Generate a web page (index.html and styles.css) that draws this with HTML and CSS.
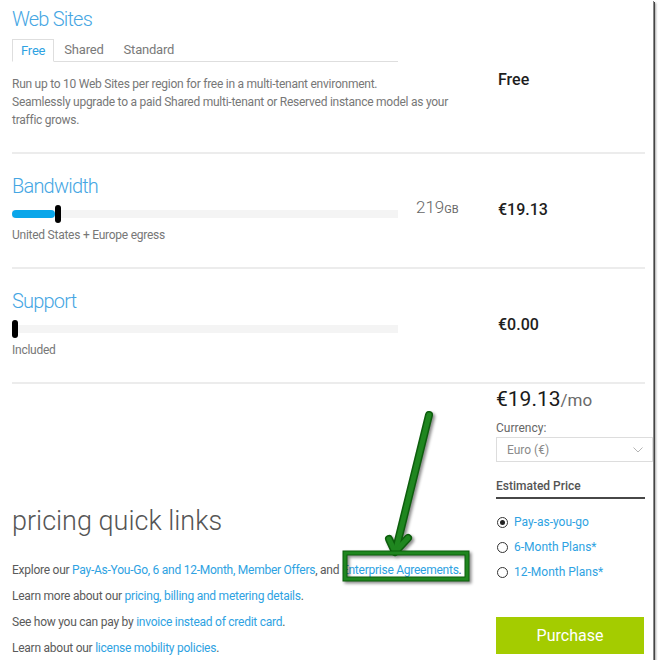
FILE: index.html
```html
<!DOCTYPE html>
<html lang="en">
<head>
<meta charset="utf-8">
<title>Pricing calculator</title>
<link rel="stylesheet" href="styles.css">
</head>
<body>
<div class="frame">
  <section class="row row-first">
    <div class="cell-main">
      <h2 class="title">Web Sites</h2>
      <div class="tabs">
        <span class="tab active">Free</span>
        <span class="tab">Shared</span>
        <span class="tab">Standard</span>
      </div>
      <p class="desc">Run up to 10 Web Sites per region for free in a multi-tenant environment.<br>Seamlessly upgrade to a paid Shared multi-tenant or Reserved instance model as your traffic grows.</p>
    </div>
    <div class="cell-mid"></div>
    <div class="cell-price cell-price-first">Free</div>
  </section>

  <section class="row">
    <div class="cell-main">
      <h2 class="title">Bandwidth</h2>
      <div class="slider">
        <div class="track"></div>
        <div class="fill" style="width:43px"></div>
        <div class="thumb" style="left:43px"></div>
      </div>
      <p class="caption">United States + Europe egress</p>
    </div>
    <div class="cell-mid"><span class="qty">219</span><span class="unit">GB</span></div>
    <div class="cell-price">€19.13</div>
  </section>

  <section class="row">
    <div class="cell-main">
      <h2 class="title">Support</h2>
      <div class="slider">
        <div class="track"></div>
        <div class="thumb" style="left:0"></div>
      </div>
      <p class="caption">Included</p>
    </div>
    <div class="cell-mid"></div>
    <div class="cell-price">€0.00</div>
  </section>

  <section class="bottom">
    <div class="links">
      <h2 class="links-title">pricing quick links</h2>
      <p class="link-line">Explore our <a>Pay-As-You-Go, 6 and 12-Month, Member Offers</a>, and <a>Enterprise Agreements</a>.</p>
      <p class="link-line">Learn more about our <a>pricing, billing and metering details</a>.</p>
      <p class="link-line">See how you can pay by <a>invoice instead of credit card</a>.</p>
      <p class="link-line">Learn about our <a>license mobility policies</a>.</p>
    </div>
    <aside class="summary">
      <div class="total">€19.13<span class="per">/mo</span></div>
      <label class="field-label">Currency:</label>
      <div class="select">
        <span>Euro (€)</span>
        <svg class="chev" width="10" height="6" viewBox="0 0 10 6"><path d="M0.5 0.5 L5 5 L9.5 0.5" fill="none" stroke="#b5b5b5" stroke-width="1"/></svg>
      </div>
      <div class="est">Estimated Price</div>
      <ul class="plans">
        <li class="plan"><span class="radio checked"></span><span><a>Pay-as-you-go</a></span></li>
        <li class="plan"><span class="radio"></span><span><a>6-Month Plans</a>*</span></li>
        <li class="plan"><span class="radio"></span><span><a>12-Month Plans</a>*</span></li>
      </ul>
      <button class="purchase">Purchase</button>
    </aside>
  </section>

  <svg class="annot" width="653" height="660" viewBox="0 0 653 660">
    <g class="mark">
      <line x1="429" y1="415" x2="396" y2="549" stroke="#0d5e0d" stroke-width="8" stroke-linecap="round"/>
      <path d="M389 539 L395 552 L408 538" fill="none" stroke="#0d5e0d" stroke-width="8" stroke-linecap="round" stroke-linejoin="round"/>
      <line x1="429" y1="415" x2="396" y2="549" stroke="#1f861f" stroke-width="5" stroke-linecap="round"/>
      <path d="M389 539 L395 552 L408 538" fill="none" stroke="#1f861f" stroke-width="5" stroke-linecap="round" stroke-linejoin="round"/>
      <rect x="345" y="553" width="122" height="26" fill="none" stroke="#0d5e0d" stroke-width="5"/>
      <rect x="345" y="553" width="122" height="26" fill="none" stroke="#1f861f" stroke-width="3"/>
    </g>
  </svg>
</div>
</body>
</html>
```

FILE: styles.css
```css
* { box-sizing: border-box; margin: 0; padding: 0; }

body {
  background: #fff;
  font-family: Roboto, "Segoe UI", sans-serif;
  color: #777;
}

.frame {
  position: relative;
  width: 653px;
  height: 660px;
  background: #fff;
  overflow: hidden;
  box-shadow: 1px 1px 0 #8a8a8a, 2px 2px 0 #444, 3px 3px 2px rgba(0,0,0,0.35);
}

a { color: #2ea2e2; text-decoration: none; }

.row {
  display: grid;
  grid-template-columns: 386px 100px 147px;
  width: 633px;
  margin-left: 12px;
  padding-top: 18px;
  padding-bottom: 23px;
  border-bottom: 2px solid #ececec;
}

.row-first { padding-top: 5px; padding-bottom: 23px; }

.title {
  font-size: 20px;
  font-weight: 300;
  letter-spacing: -0.8px;
  line-height: 28px;
  color: #45a6e3;
}

.tabs {
  display: flex;
  height: 23px;
  margin-top: 6px;
  border-bottom: 1px solid #dedede;
}

.tab {
  font-size: 13px;
  letter-spacing: -0.2px;
  line-height: 22px;
  padding: 0 10px;
  color: #7a7a7a;
}

.tab.active {
  padding: 0 8px;
  height: 23px;
  color: #2ea2e2;
  background: #fff;
  border: 1px solid #dedede;
  border-bottom-color: #fff;
}

.desc {
  width: 440px;
  margin-top: 13px;
  font-size: 12px;
  letter-spacing: -0.25px;
  line-height: 18px;
  color: #777;
}

.slider {
  position: relative;
  height: 18px;
  margin-top: 5px;
}

.track {
  position: absolute;
  left: 0; right: 0; top: 5px;
  height: 8px;
  background: #f4f4f4;
}

.fill {
  position: absolute;
  left: 0; top: 5px;
  height: 8px;
  border-radius: 4px;
  background: #0aa6ea;
}

.thumb {
  position: absolute;
  top: 0;
  width: 6px;
  height: 18px;
  border-radius: 3px;
  background: #000;
}

.caption {
  margin-top: 3px;
  font-size: 12px;
  letter-spacing: -0.25px;
  line-height: 18px;
  color: #777;
}

.cell-mid {
  padding-left: 18px;
  padding-top: 23px;
  line-height: 24px;
  color: #666;
}

.qty { font-size: 17px; font-weight: 300; }
.unit { font-size: 11px; }

.cell-price {
  padding-top: 28px;
  font-size: 16px;
  font-weight: 500;
  line-height: 20px;
  color: #1e1e1e;
}

.cell-price-first { padding-top: 65px; }

.bottom {
  display: grid;
  grid-template-columns: 484px 157px;
  margin-left: 12px;
}

.links { padding-top: 121px; }

.links-title {
  font-size: 27px;
  font-weight: 300;
  line-height: 32px;
  color: #555;
}

.link-line {
  font-size: 12px;
  letter-spacing: -0.25px;
  line-height: 26px;
  color: #5a5a5a;
}

.links-title + .link-line { margin-top: 20px; }

.summary {
  display: flex;
  flex-direction: column;
  padding-top: 1px;
}

.total {
  font-size: 21px;
  line-height: 28px;
  color: #1a1a1a;
}

.per {
  font-size: 17px;
  color: #6a6a6a;
}

.field-label {
  margin-top: 6px;
  font-size: 12px;
  line-height: 16px;
  color: #666;
}

.select {
  display: flex;
  align-items: center;
  justify-content: space-between;
  height: 25px;
  margin-top: 1px;
  padding: 0 9px 0 10px;
  border: 1px solid #dddddd;
  font-size: 12px;
  color: #8a8a8a;
}

.est {
  width: 149px;
  margin-top: 16px;
  padding-bottom: 3px;
  border-bottom: 2px solid #474747;
  font-size: 12px;
  font-weight: 500;
  line-height: 16px;
  color: #555;
}

.plans {
  list-style: none;
  margin-top: 11px;
}

.plan {
  display: flex;
  align-items: center;
  gap: 6px;
  font-size: 12px;
  line-height: 25px;
  color: #2ea2e2;
}

.radio {
  width: 11px;
  height: 11px;
  margin-left: 1px;
  border: 1.5px solid #333;
  border-radius: 50%;
  display: flex;
  align-items: center;
  justify-content: center;
}

.radio.checked::after {
  content: "";
  width: 5px;
  height: 5px;
  border-radius: 50%;
  background: #222;
}

.purchase {
  width: 148px;
  height: 37px;
  margin-top: 32px;
  border: none;
  background: #a4cc00;
  color: #fff;
  font-family: inherit;
  font-size: 16px;
}

.annot {
  position: absolute;
  left: 0;
  top: 0;
  pointer-events: none;
}

.mark { filter: drop-shadow(2px 2px 1.5px rgba(0,0,0,0.45)); }
```
